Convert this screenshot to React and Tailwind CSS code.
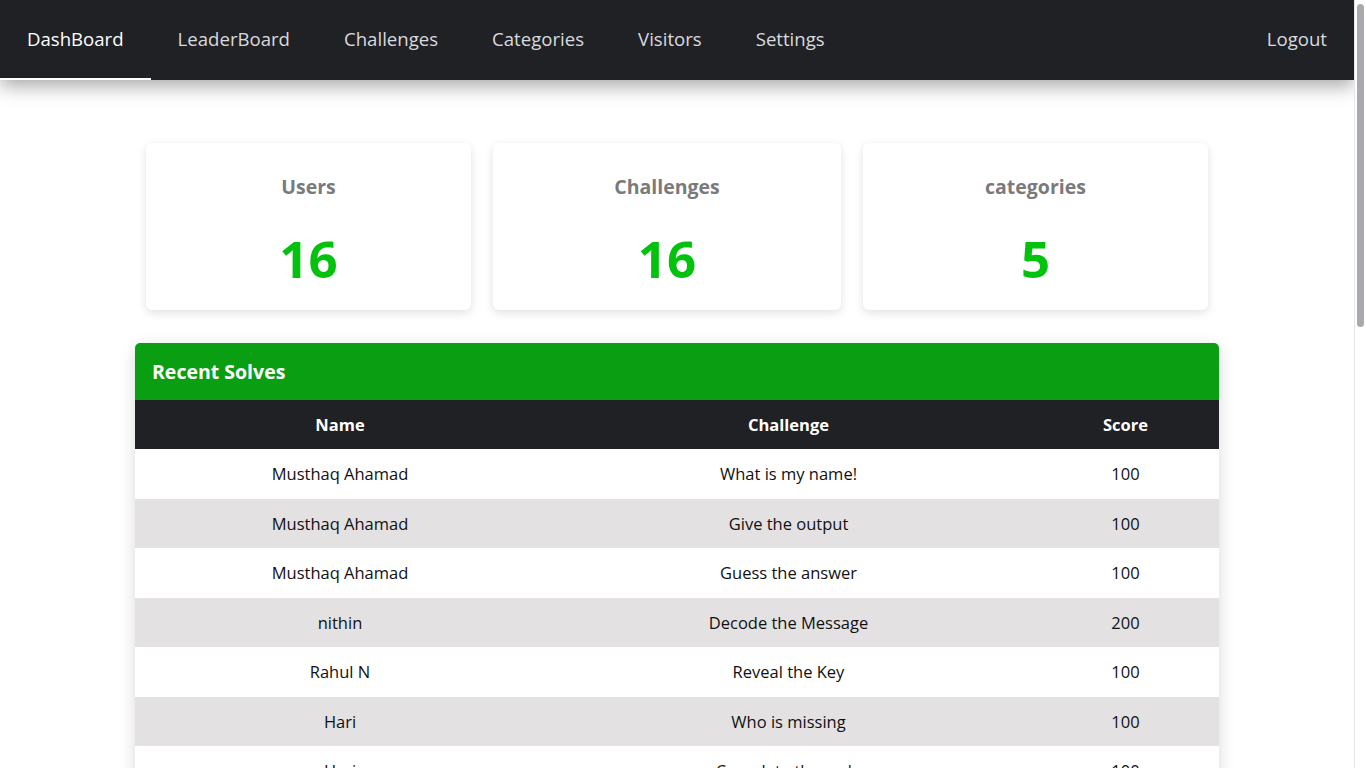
import React from "react";

const navItems = ["DashBoard", "LeaderBoard", "Challenges", "Categories", "Visitors", "Settings"];

const stats = [
  { title: "Users", value: "16", w: "w-[325px]" },
  { title: "Challenges", value: "16", w: "w-[348px]" },
  { title: "categories", value: "5", w: "w-[345px]" },
];

const rows = [
  ["Musthaq Ahamad", "What is my name!", "100"],
  ["Musthaq Ahamad", "Give the output", "100"],
  ["Musthaq Ahamad", "Guess the answer", "100"],
  ["nithin", "Decode the Message", "200"],
  ["Rahul N", "Reveal the Key", "100"],
  ["Hari", "Who is missing", "100"],
  ["Hari", "Complete the code", "100"],
  ["Hari", "What is my name!", "100"],
  ["nithin", "Guess the answer", "100"],
  ["Rahul N", "Give the output", "100"],
  ["Arjun", "Decode the Message", "200"],
  ["Arjun", "Reveal the Key", "100"],
  ["Sneha", "Who is missing", "100"],
  ["Sneha", "Complete the code", "100"],
  ["Vishnu", "What is my name!", "100"],
  ["Vishnu", "Give the output", "100"],
  ["Anjali", "Guess the answer", "100"],
  ["Anjali", "Decode the Message", "200"],
  ["Rahul N", "Who is missing", "100"],
  ["nithin", "Complete the code", "100"],
  ["Akhil", "Reveal the Key", "100"],
  ["Akhil", "What is my name!", "100"],
  ["Fathima", "Give the output", "100"],
  ["Fathima", "Guess the answer", "100"],
  ["Hari", "Decode the Message", "200"],
  ["Musthaq Ahamad", "Reveal the Key", "100"],
];

export default function App() {
  return (
    <div
      className="h-screen flex overflow-hidden bg-white text-[#111]"
      style={{ fontFamily: '"Open Sans", "Noto Sans", sans-serif' }}
    >
      <div className="flex-1 min-w-0 h-screen overflow-hidden">
        <nav className="h-[80px] bg-[#202125] flex items-stretch justify-between shadow-[0_6px_18px_rgba(0,0,0,0.35)] relative z-10">
          <div className="flex items-stretch">
            {navItems.map((item, i) => (
              <div
                key={item}
                className={
                  "px-[27px] flex items-center text-[18.6px] pb-[2px] " +
                  (i === 0 ? "text-white border-b-2 border-white pt-[2px]" : "text-[#d8dade]")
                }
              >
                {item}
              </div>
            ))}
          </div>
          <div className="px-[27px] flex items-center text-[18.6px] pb-[2px] text-[#d8dade]">Logout</div>
        </nav>

        <main className="pt-[63px] pb-[50px]">
          <div className="flex justify-center gap-[22px]">
            {stats.map((s) => (
              <div
                key={s.title}
                className={s.w + " h-[167px] bg-white rounded-[6px] shadow-[0_3px_10px_rgba(0,0,0,0.12)] flex flex-col items-center pt-[30px]"}
              >
                <div className="text-[19.5px] font-bold text-[#7a7a7a] leading-[28px]">{s.title}</div>
                <div className="mt-[24px] text-[51px] font-bold text-[#02c20e] leading-[66px]">{s.value}</div>
              </div>
            ))}
          </div>

          <div className="w-[1084px] mx-auto mt-[33px] rounded-t-[5px] overflow-hidden shadow-[0_4px_16px_rgba(0,0,0,0.15)]">
            <div className="h-[57px] bg-[#0a9e12] flex items-center px-[17px] text-white text-[19.5px] font-bold">
              Recent Solves
            </div>
            <table className="w-full table-fixed border-collapse text-[16.5px]">
              <colgroup>
                <col className="w-[410px]" />
                <col className="w-[487px]" />
                <col className="w-[187px]" />
              </colgroup>
              <thead>
                <tr className="h-[49px] bg-[#202125] text-white font-bold">
                  <th className="text-center font-bold pt-[2px]">Name</th>
                  <th className="text-center font-bold pt-[2px]">Challenge</th>
                  <th className="text-center font-bold pt-[2px]">Score</th>
                </tr>
              </thead>
              <tbody>
                {rows.map((r, i) => (
                  <tr key={i} className={"h-[49.5px] " + (i % 2 === 1 ? "bg-[#e3e1e2]" : "bg-white")}>
                    <td className="text-center pt-[2px]">{r[0]}</td>
                    <td className="text-center pt-[2px]">{r[1]}</td>
                    <td className="text-center pt-[2px]">{r[2]}</td>
                  </tr>
                ))}
              </tbody>
            </table>
          </div>
        </main>
      </div>
      <aside className="w-[12px] shrink-0 h-screen bg-white border-l border-[#e4e4ea] pt-[4px] flex justify-center">
        <div className="w-[7px] h-[323px] rounded-full bg-[#a9a9ae]" />
      </aside>
    </div>
  );
}
